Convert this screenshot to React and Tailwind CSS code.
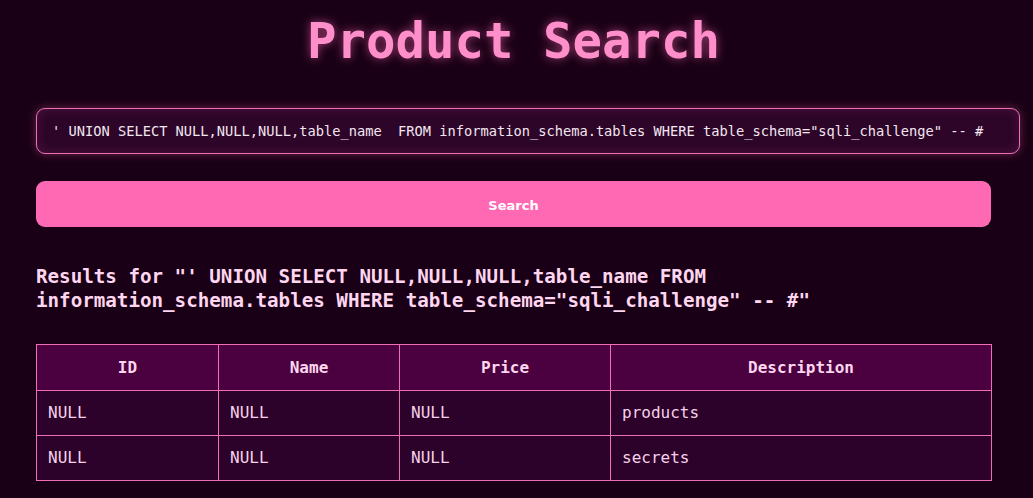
import React from "react";

export default function App() {
  const q = `' UNION SELECT NULL,NULL,NULL,table_name  FROM information_schema.tables WHERE table_schema="sqli_challenge" -- #`;
  const rows = [
    ["NULL", "NULL", "NULL", "products"],
    ["NULL", "NULL", "NULL", "secrets"],
  ];
  return (
    <div className="min-h-[498px] w-full bg-[#1a0016] overflow-hidden font-['DejaVu_Sans_Mono',monospace]">
      <div className="w-[955px] ml-[36px]">
        <h1 className="h-[82px] pt-[14px] text-center text-[49px] leading-[56px] font-bold text-[#ff8fcb] [text-shadow:0_0_10px_rgba(255,105,180,0.6)]">
          Product Search
        </h1>
        <div className="mt-[26px] w-[984px] h-[46px] rounded-[9px] border border-[#f06fb4] bg-[#2c0528] shadow-[0_0_8px_rgba(255,105,180,0.35),inset_0_0_12px_rgba(255,105,180,0.15)] flex items-center pl-[15px] text-[13.7px] text-[#f3e6f0] whitespace-pre">
          {q}
        </div>
        <button className="mt-[27px] w-[955px] h-[46px] pt-[3px] rounded-[9px] bg-[#ff69b4] text-white text-[13px] font-bold font-['DejaVu_Sans',sans-serif] block">
          Search
        </button>
        <h2 className="mt-[38px] text-[19.2px] leading-[24px] font-bold text-[#ffd6ef] whitespace-pre-wrap">
          {`Results for "' UNION SELECT NULL,NULL,NULL,table_name FROM\ninformation_schema.tables WHERE table_schema="sqli_challenge" -- #"`}
        </h2>
        <table className="mt-[31px] w-[955px] border-collapse text-[16px] text-[#f6d2ea] table-fixed">
          <colgroup>
            <col className="w-[182px]" />
            <col className="w-[181px]" />
            <col className="w-[211px]" />
            <col className="w-[381px]" />
          </colgroup>
          <thead>
            <tr className="h-[46px] bg-[#4b0140]">
              {["ID", "Name", "Price", "Description"].map((h) => (
                <th key={h} className="border border-[#f06fb4] font-bold text-center text-[#ffd6ef] align-middle">
                  {h}
                </th>
              ))}
            </tr>
          </thead>
          <tbody>
            {rows.map((r, i) => (
              <tr key={i} className="h-[45px] bg-[#2c012a]">
                {r.map((c, j) => (
                  <td key={j} className="border border-[#f06fb4] pl-[11px] align-middle">
                    {c}
                  </td>
                ))}
              </tr>
            ))}
          </tbody>
        </table>
      </div>
    </div>
  );
}
